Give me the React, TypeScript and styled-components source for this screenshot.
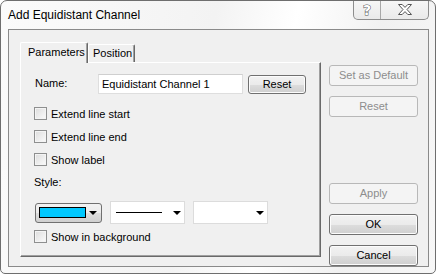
import React from 'react';
import styled, { createGlobalStyle } from 'styled-components';

const GlobalStyle = createGlobalStyle`
  html, body {
    margin: 0;
    padding: 0;
    background: #ffffff;
  }
  * {
    box-sizing: border-box;
  }
`;

const Window = styled.div`
  width: 436px;
  height: 274px;
  display: flex;
  flex-direction: column;
  border: 1px solid #6e6e6e;
  border-radius: 7px 7px 5px 5px;
  background: linear-gradient(100deg, #fbfbfb 0%, #f3f3f3 45%, #ffffff 62%, #f1f1f1 80%, #f7f7f7 100%);
  font-family: 'Liberation Sans', Arial, sans-serif;
  font-size: 11px;
  color: #000;
  overflow: hidden;
`;

const TitleBar = styled.div`
  height: 28px;
  display: flex;
  align-items: flex-start;
  padding-left: 7px;
  position: relative;
`;

const TitleText = styled.span`
  font-size: 12px;
  line-height: 14px;
  margin-top: 7px;
  color: #000;
`;

const CaptionButtons = styled.div`
  position: absolute;
  top: -1px;
  right: 6px;
  height: 20px;
  display: flex;
  border: 1px solid #8d8d8d;
  border-top: none;
  border-radius: 0 0 5px 5px;
  background: linear-gradient(#f7f7f7, #eaeaea);
  overflow: hidden;
`;

const CaptionButton = styled.div<{ $w: number; $divider?: boolean }>`
  width: ${(p) => p.$w}px;
  height: 100%;
  display: flex;
  align-items: center;
  justify-content: center;
  border-right: ${(p) => (p.$divider ? '1px solid #a8a8a8' : 'none')};
`;

const HelpGlyph = styled.span`
  font-family: 'DejaVu Sans', sans-serif;
  font-weight: bold;
  font-size: 14px;
  line-height: 14px;
  color: #ffffff;
  -webkit-text-stroke: 1px #555;
  paint-order: stroke fill;
  margin-top: 1px;
`;

const Client = styled.div`
  margin: 0 6px 0 7px;
  height: 238px;
  border: 1px solid #8a8a8a;
  background: #f0f0f0;
  display: flex;
  padding: 12px 10px 0 11px;
`;

const TabControl = styled.div`
  width: 301px;
  height: 215px;
  display: flex;
  flex-direction: column;
`;

const TabStrip = styled.div`
  height: 20px;
  display: flex;
  align-items: flex-end;
`;

const Tab = styled.div<{ $active?: boolean; $w: number }>`
  width: ${(p) => p.$w}px;
  height: ${(p) => (p.$active ? '21px' : '18px')};
  margin-bottom: ${(p) => (p.$active ? '-1px' : '0')};
  position: relative;
  z-index: ${(p) => (p.$active ? 2 : 1)};
  background: #f0f0f0;
  border-top: 1px solid #ffffff;
  border-left: 1px solid #ffffff;
  border-right: 1px solid #696969;
  box-shadow: inset -1px 0 0 #a0a0a0;
  border-radius: 2px 2px 0 0;
  display: flex;
  align-items: flex-start;
  padding-left: ${(p) => (p.$active ? '7px' : '4px')};
  padding-top: ${(p) => (p.$active ? '3px' : '2px')};
  line-height: 13px;
`;

const Panel = styled.div`
  flex: 1;
  background: #f0f0f0;
  border-top: 1px solid #ffffff;
  border-left: 1px solid #ffffff;
  border-right: 1px solid #696969;
  border-bottom: 1px solid #696969;
  box-shadow: inset -1px -1px 0 #a0a0a0;
  display: flex;
  flex-direction: column;
  padding: 11px 13px 0 13px;
`;

const NameRow = styled.div`
  height: 20px;
  display: flex;
  align-items: center;
`;

const NameLabel = styled.span`
  width: 64px;
  padding-left: 1px;
  margin-top: -3px;
`;

const TextInput = styled.div`
  width: 145px;
  height: 20px;
  background: #ffffff;
  border: 1px solid #dedede;
  border-top-color: #cfcfcf;
  display: flex;
  align-items: center;
  padding-left: 3px;
`;

const Button = styled.div<{ $disabled?: boolean; $w?: number; $h?: number }>`
  width: ${(p) => (p.$w ? `${p.$w}px` : '100%')};
  height: ${(p) => p.$h ?? 21}px;
  border: 1px solid ${(p) => (p.$disabled ? '#b8b8b8' : '#707070')};
  border-radius: 3px;
  background: ${(p) =>
    p.$disabled
      ? '#f4f4f4'
      : 'linear-gradient(#f2f2f2 0%, #ebebeb 50%, #dddddd 51%, #cfcfcf 100%)'};
  box-shadow: ${(p) => (p.$disabled ? 'none' : 'inset 0 0 0 1px #fcfcfc')};
  color: ${(p) => (p.$disabled ? '#8d8d8d' : '#000')};
  display: flex;
  align-items: center;
  justify-content: center;
  line-height: 13px;
`;

const ResetSmall = styled(Button)`
  margin-left: 5px;
`;

const CheckRow = styled.div<{ $mt: number }>`
  height: 13px;
  margin-top: ${(p) => p.$mt}px;
  display: flex;
  align-items: center;
  gap: 4px;
`;

const CheckBox = styled.div`
  width: 13px;
  height: 13px;
  border: 1px solid #8e8f8f;
  background: linear-gradient(135deg, #dcdcdc 0%, #ececec 50%, #fbfbfb 100%);
  box-shadow: inset 0 0 0 1px #f4f4f4;
`;

const StyleLabel = styled.div`
  height: 13px;
  line-height: 13px;
  margin-top: 10px;
`;

const DropRow = styled.div`
  height: 23px;
  margin-top: 12px;
  display: flex;
  align-items: center;
  gap: 8px;
`;

const ColorPicker = styled.div`
  width: 67px;
  height: 20px;
  margin-left: 1px;
  border: 1px solid #707070;
  border-radius: 3px;
  background: linear-gradient(#f2f2f2 0%, #ebebeb 50%, #dddddd 51%, #cfcfcf 100%);
  display: flex;
  align-items: center;
  padding-left: 3px;
  gap: 3px;
`;

const Swatch = styled.div<{ $color: string }>`
  width: 47px;
  height: 11px;
  background: ${(p) => p.$color};
  border: 1px solid #000;
`;

const Arrow = styled.div`
  width: 0;
  height: 0;
  border-left: 4px solid transparent;
  border-right: 4px solid transparent;
  border-top: 4px solid #000;
  flex-shrink: 0;
`;

const Combo = styled.div`
  width: 75px;
  height: 23px;
  background: #ffffff;
  border: 1px solid #dcdcdc;
  display: flex;
  align-items: center;
  justify-content: space-between;
  padding: 0 3px 0 5px;
`;

const LineSample = styled.div`
  width: 46px;
  height: 1px;
  background: #000;
`;

const ButtonColumn = styled.div`
  width: 89px;
  margin-left: 8px;
  padding-top: 23px;
  display: flex;
  flex-direction: column;
  gap: 10px;
`;

const BottomGroup = styled.div`
  margin-top: auto;
  display: flex;
  flex-direction: column;
  gap: 10px;
`;

const CloseIcon = () => (
  <svg width="14" height="11" viewBox="0 0 14 11">
    <polygon
      points="0.5,0.5 4.2,0.5 7,3.4 9.8,0.5 13.5,0.5 9,5.5 13.5,10.5 9.8,10.5 7,7.6 4.2,10.5 0.5,10.5 5,5.5"
      fill="#ffffff"
      stroke="#555"
      strokeWidth="1"
      strokeLinejoin="round"
    />
  </svg>
);

const App = () => {
  return (
    <>
      <GlobalStyle />
      <Window>
        <TitleBar>
          <TitleText>Add Equidistant Channel</TitleText>
          <CaptionButtons>
            <CaptionButton $w={27} $divider>
              <HelpGlyph>?</HelpGlyph>
            </CaptionButton>
            <CaptionButton $w={47}>
              <CloseIcon />
            </CaptionButton>
          </CaptionButtons>
        </TitleBar>
        <Client>
          <TabControl>
            <TabStrip>
              <Tab $active $w={68}>Parameters</Tab>
              <Tab $w={47}>Position</Tab>
            </TabStrip>
            <Panel>
              <NameRow>
                <NameLabel>Name:</NameLabel>
                <TextInput>Equidistant Channel 1</TextInput>
                <ResetSmall $w={58} $h={19}>Reset</ResetSmall>
              </NameRow>
              <CheckRow $mt={13}>
                <CheckBox />
                <span>Extend line start</span>
              </CheckRow>
              <CheckRow $mt={10}>
                <CheckBox />
                <span>Extend line end</span>
              </CheckRow>
              <CheckRow $mt={10}>
                <CheckBox />
                <span>Show label</span>
              </CheckRow>
              <StyleLabel>Style:</StyleLabel>
              <DropRow>
                <ColorPicker>
                  <Swatch $color="#00c8ff" />
                  <Arrow />
                </ColorPicker>
                <Combo>
                  <LineSample />
                  <Arrow />
                </Combo>
                <Combo>
                  <span />
                  <Arrow />
                </Combo>
              </DropRow>
              <CheckRow $mt={6}>
                <CheckBox />
                <span>Show in background</span>
              </CheckRow>
            </Panel>
          </TabControl>
          <ButtonColumn>
            <Button $disabled>Set as Default</Button>
            <Button $disabled>Reset</Button>
            <BottomGroup>
              <Button $disabled>Apply</Button>
              <Button>OK</Button>
              <Button>Cancel</Button>
            </BottomGroup>
          </ButtonColumn>
        </Client>
      </Window>
    </>
  );
};

export default App;
